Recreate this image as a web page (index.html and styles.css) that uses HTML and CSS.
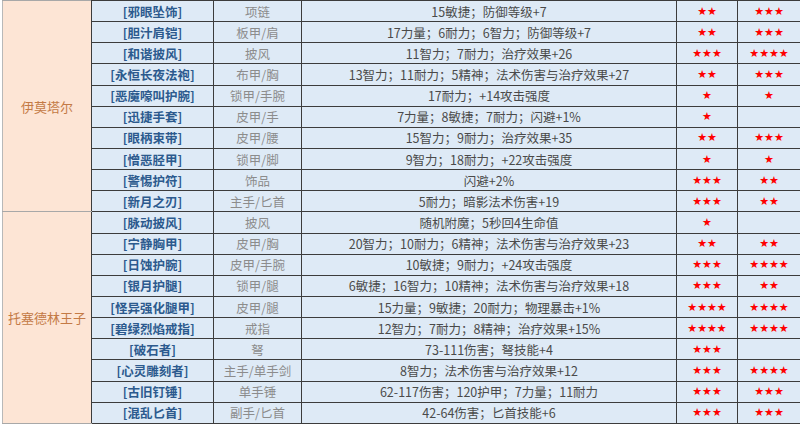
FILE: index.html
```html
<!DOCTYPE html>
<html lang="zh">
<head>
<meta charset="utf-8">
<link rel="stylesheet" href="styles.css">
</head>
<body>
<table class="loot">
<colgroup>
<col class="c-boss"><col class="c-name"><col class="c-type"><col class="c-stat"><col class="c-r1"><col class="c-r2">
</colgroup>
<tbody>
<tr><td class="boss" rowspan="10">伊莫塔尔</td><td class="name">[邪眼坠饰]</td><td class="type">项链</td><td class="stat">15敏捷；防御等级+7</td><td class="star">★★</td><td class="star">★★★</td></tr>
<tr><td class="name">[胆汁肩铠]</td><td class="type">板甲/肩</td><td class="stat">17力量；6耐力；6智力；防御等级+7</td><td class="star">★★</td><td class="star">★★★</td></tr>
<tr><td class="name">[和谐披风]</td><td class="type">披风</td><td class="stat">11智力；7耐力；治疗效果+26</td><td class="star">★★★</td><td class="star">★★★★</td></tr>
<tr><td class="name">[永恒长夜法袍]</td><td class="type">布甲/胸</td><td class="stat">13智力；11耐力；5精神；法术伤害与治疗效果+27</td><td class="star">★★</td><td class="star">★★★</td></tr>
<tr><td class="name">[恶魔嚎叫护腕]</td><td class="type">锁甲/手腕</td><td class="stat">17耐力；+14攻击强度</td><td class="star">★</td><td class="star">★</td></tr>
<tr><td class="name">[迅捷手套]</td><td class="type">皮甲/手</td><td class="stat">7力量；8敏捷；7耐力；闪避+1%</td><td class="star">★</td><td class="star"></td></tr>
<tr><td class="name">[眼柄束带]</td><td class="type">皮甲/腰</td><td class="stat">15智力；9耐力；治疗效果+35</td><td class="star">★★</td><td class="star">★★★</td></tr>
<tr><td class="name">[憎恶胫甲]</td><td class="type">锁甲/脚</td><td class="stat">9智力；18耐力；+22攻击强度</td><td class="star">★</td><td class="star">★</td></tr>
<tr><td class="name">[警惕护符]</td><td class="type">饰品</td><td class="stat">闪避+2%</td><td class="star">★★★</td><td class="star">★★</td></tr>
<tr><td class="name">[新月之刃]</td><td class="type">主手/匕首</td><td class="stat">5耐力；暗影法术伤害+19</td><td class="star">★★★</td><td class="star">★★</td></tr>
<tr><td class="boss" rowspan="10">托塞德林王子</td><td class="name">[脉动披风]</td><td class="type">披风</td><td class="stat">随机附魔；5秒回4生命值</td><td class="star">★</td><td class="star"></td></tr>
<tr><td class="name">[宁静胸甲]</td><td class="type">皮甲/胸</td><td class="stat">20智力；10耐力；6精神；法术伤害与治疗效果+23</td><td class="star">★★</td><td class="star">★★</td></tr>
<tr><td class="name">[日蚀护腕]</td><td class="type">皮甲/手腕</td><td class="stat">10敏捷；9耐力；+24攻击强度</td><td class="star">★★★</td><td class="star">★★★★</td></tr>
<tr><td class="name">[银月护腿]</td><td class="type">锁甲/腿</td><td class="stat">6敏捷；16智力；10精神；法术伤害与治疗效果+18</td><td class="star">★★★</td><td class="star">★★</td></tr>
<tr><td class="name">[怪异强化腿甲]</td><td class="type">皮甲/腿</td><td class="stat">15力量；9敏捷；20耐力；物理暴击+1%</td><td class="star">★★★★</td><td class="star">★★★★</td></tr>
<tr><td class="name">[碧绿烈焰戒指]</td><td class="type">戒指</td><td class="stat">12智力；7耐力；8精神；治疗效果+15%</td><td class="star">★★★★</td><td class="star">★★★★</td></tr>
<tr><td class="name">[破石者]</td><td class="type">弩</td><td class="stat">73-111伤害；弩技能+4</td><td class="star">★★★</td><td class="star"></td></tr>
<tr><td class="name">[心灵雕刻者]</td><td class="type">主手/单手剑</td><td class="stat">8智力；法术伤害与治疗效果+12</td><td class="star">★★★</td><td class="star">★★★★</td></tr>
<tr><td class="name">[古旧钉锤]</td><td class="type">单手锤</td><td class="stat">62-117伤害；120护甲；7力量；11耐力</td><td class="star">★★★</td><td class="star">★★★</td></tr>
<tr><td class="name">[混乱匕首]</td><td class="type">副手/匕首</td><td class="stat">42-64伤害；匕首技能+6</td><td class="star">★★★</td><td class="star">★★★</td></tr>
</tbody>
</table>
</body>
</html>
```
FILE: styles.css
```css
html, body {
  margin: 0;
  padding: 0;
  background: #ffffff;
}
body {
  padding-left: 2px;
  font-family: "Noto Sans CJK SC", "Noto Sans", sans-serif;
}
.loot {
  border-collapse: collapse;
  table-layout: fixed;
  width: 798px;
  font-size: 12.5px;
}
.c-boss { width: 89px; }
.c-name { width: 122px; }
.c-type { width: 88px; }
.c-stat { width: 375px; }
.c-r1 { width: 61px; }
.c-r2 { width: 63px; }
.loot tr {
  height: 21.15px;
}
.loot td {
  border: 1px solid #3c3c3c;
  background: #deeaf6;
  text-align: center;
  vertical-align: middle;
  padding: 0;
  line-height: 19px;
  white-space: nowrap;
  overflow: hidden;
}
.loot td.boss {
  background: #fde5d5;
  color: #c47a45;
  border-left: 1px solid #b8b8b8;
  border-top: 1px solid #a8a8a8;
  border-bottom: 1px solid #a8a8a8;
  font-size: 13px;
}
.name {
  color: #2c5a8e;
  font-weight: bold;
}
.type {
  color: #8c8c8c;
}
.stat {
  color: #4a4a4a;
}
.star {
  color: #ff0000;
  font-family: "DejaVu Sans", sans-serif;
  font-size: 11px;
}
```
